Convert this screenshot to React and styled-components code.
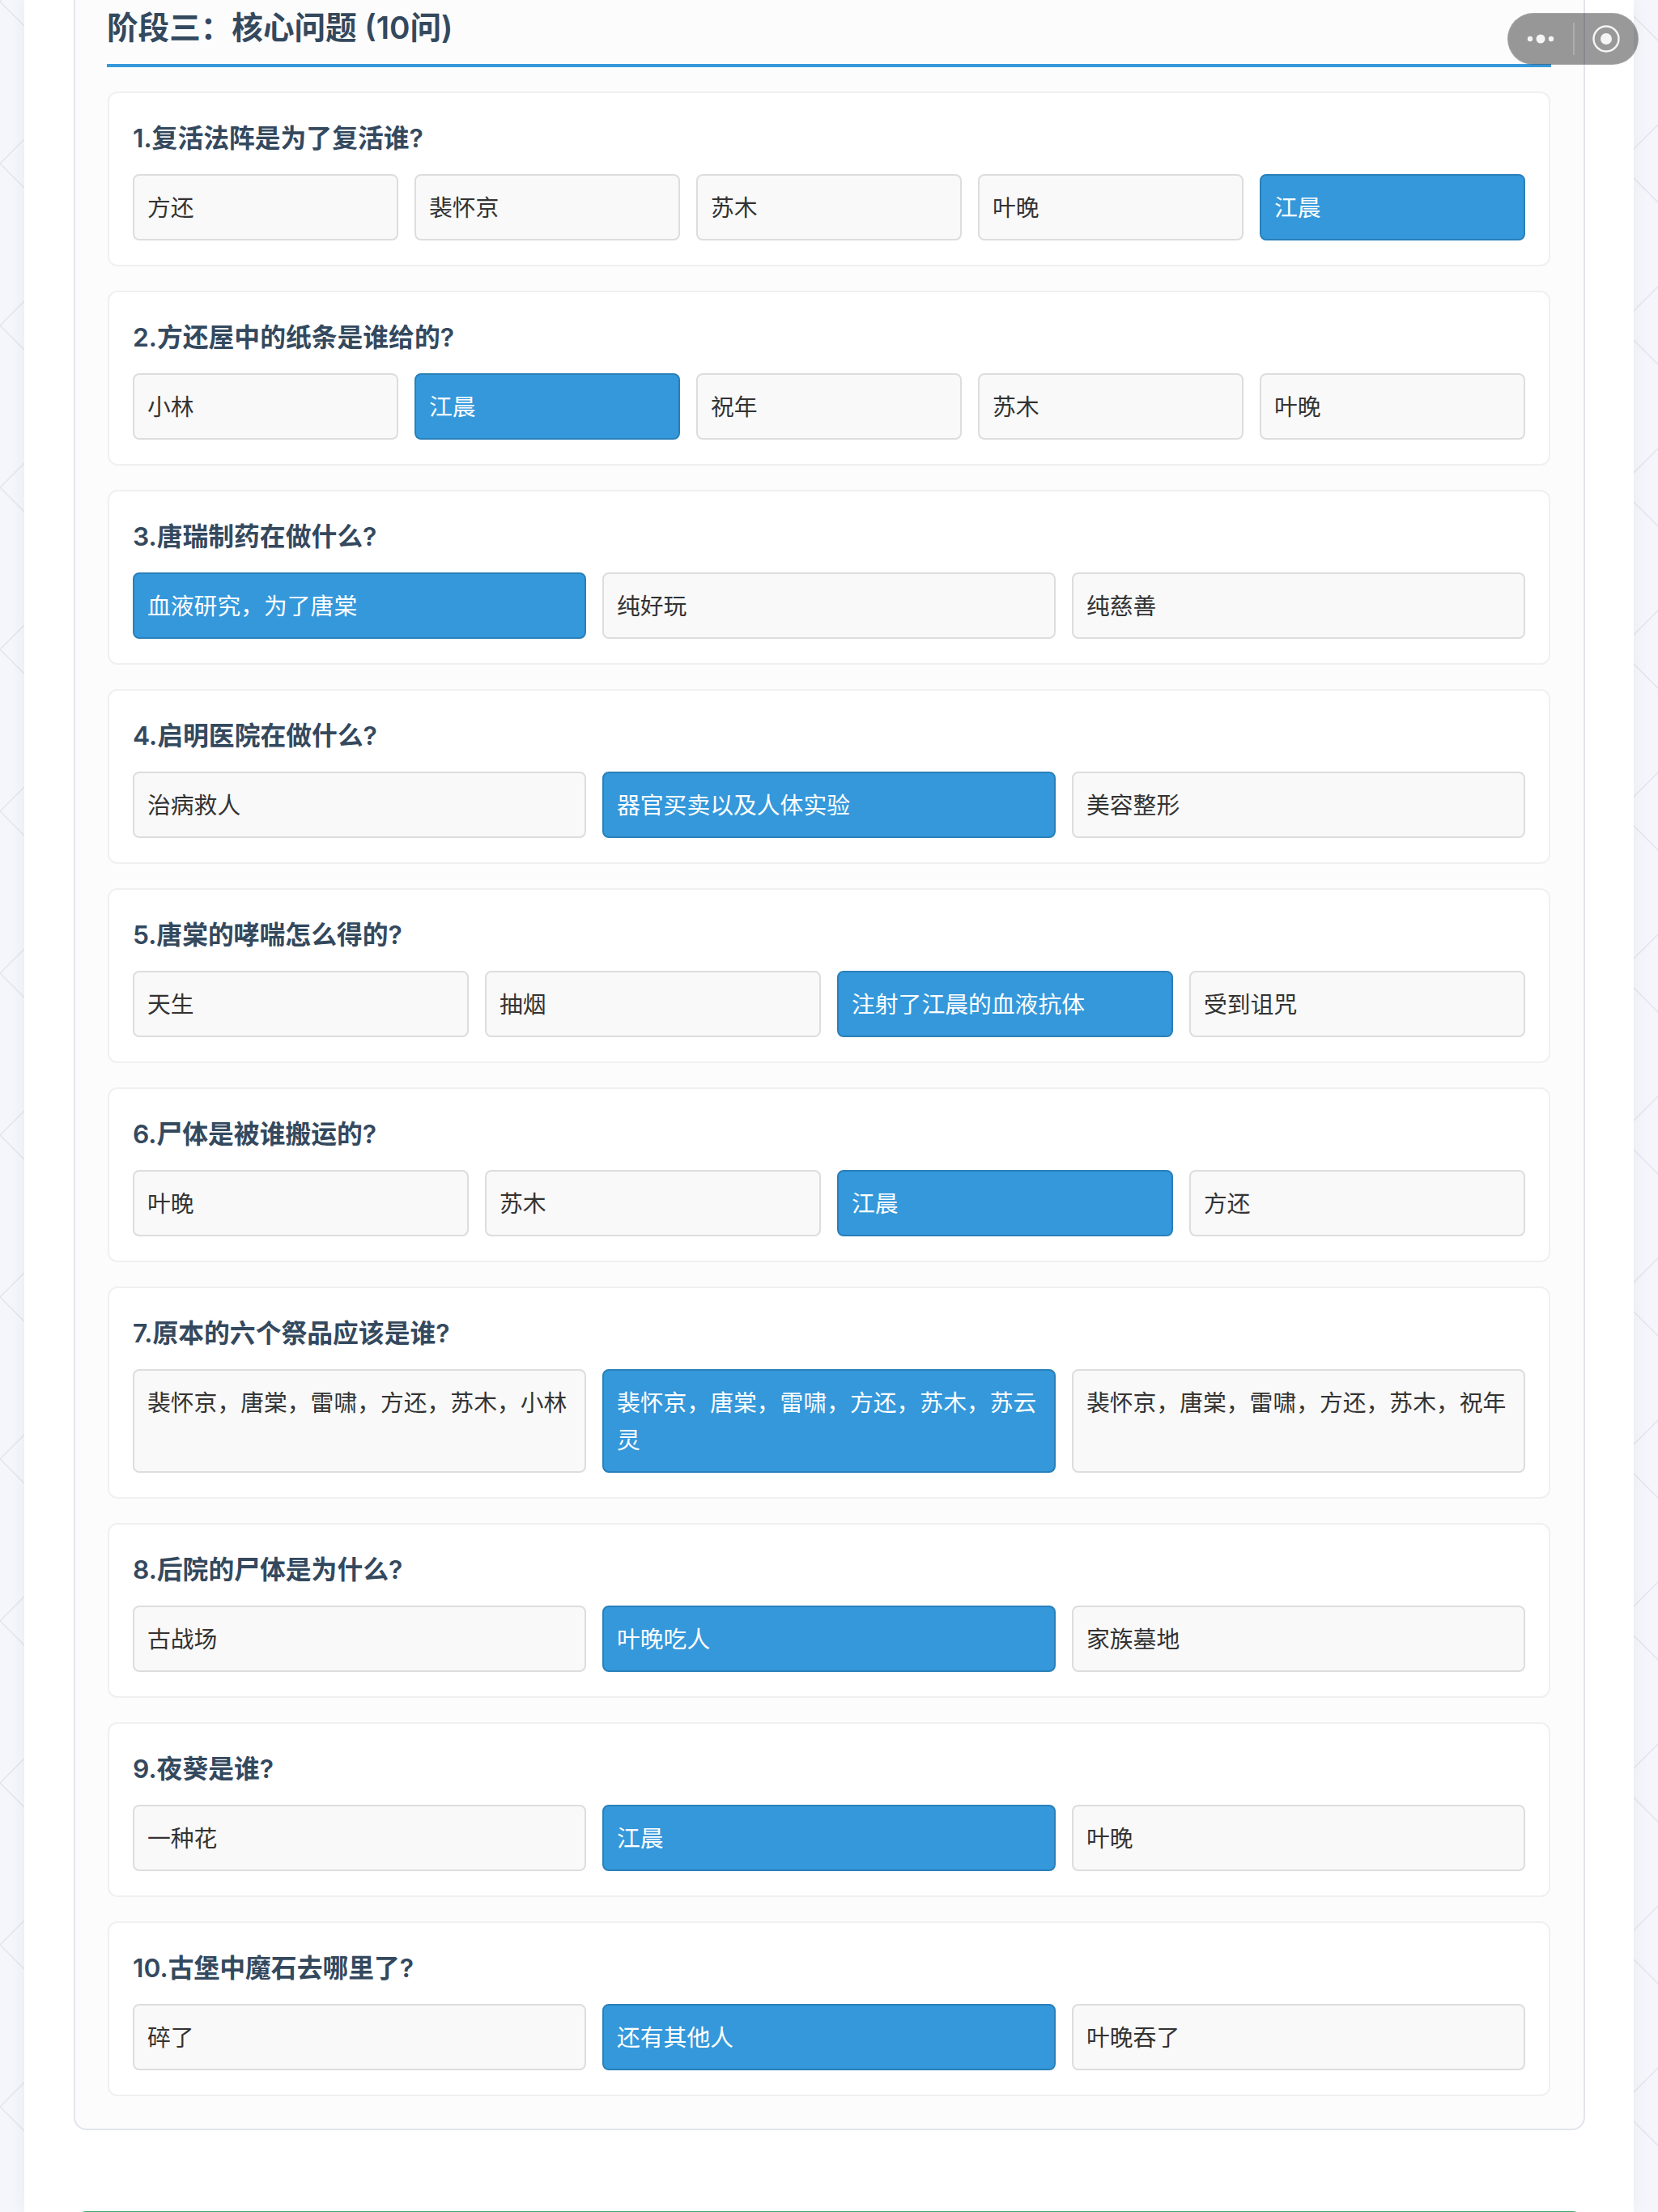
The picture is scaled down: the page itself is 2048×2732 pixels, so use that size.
import React from "react";
import styled, { createGlobalStyle } from "styled-components";

const Global = createGlobalStyle`
  html, body { margin: 0; padding: 0; background: #f5f6fb; }
  * { box-sizing: border-box; }
  body { font-family: Inter, "Noto Sans CJK SC", "Noto Sans", sans-serif; }
`;

const Page = styled.div`
  position: relative;
  height: 2732px;
  padding: 0 30px;
  overflow: hidden;
  background: #f5f6fb;
`;

const Pattern = styled.svg`
  position: absolute;
  inset: 0;
  width: 100%;
  height: 100%;
`;

const Sheet = styled.main`
  position: relative;
  height: 100%;
  padding: 0 60px 0 61px;
  background: #fff;
  box-shadow: 0 0 20px rgba(0, 0, 0, 0.05);
`;

const Stage = styled.section`
  height: 2631px;
  padding: 0 41px 0 40px;
  background: #fcfcfc;
  border: 2px solid #e2e5ec;
  border-top: 0;
  border-radius: 0 0 16px 16px;
`;

const StageTitle = styled.h2`
  height: 83px;
  margin: 0 0 30px -1px;
  width: calc(100% + 2px);
  padding-top: 11px;
  border-bottom: 4px solid #3498db;
  color: #34495e;
  font-size: 38.6px;
  line-height: 46px;
  font-weight: 600;
`;

const QuestionList = styled.div`
  display: flex;
  flex-direction: column;
  gap: 30.5px;
`;

const Card = styled.article`
  padding: 32px 29px 30px;
  background: #fff;
  border: 2px solid #f0f0f0;
  border-radius: 12px;
`;

const Question = styled.h3`
  margin: 0 0 20px;
  color: #34495e;
  font-size: 31.8px;
  line-height: 48px;
  font-weight: 600;
`;

const Options = styled.div`
  display: grid;
  grid-template-columns: repeat(${(p) => p.$count}, 1fr);
  gap: 20px;
`;

const Option = styled.div`
  padding: 17px 16px 14.5px;
  border: 2px solid ${(p) => (p.$selected ? "#2980b9" : "#ddd")};
  border-radius: 8px;
  background: ${(p) => (p.$selected ? "#3498db" : "#f9f9f9")};
  color: ${(p) => (p.$selected ? "#fff" : "#333")};
  font-size: 28.8px;
  line-height: 46px;
`;

const NextPanel = styled.div`
  height: 40px;
  margin-top: 100px;
  border: 2px solid #3aa76d;
  border-radius: 16px 16px 0 0;
`;

const Capsule = styled.div`
  position: absolute;
  top: 16px;
  left: 1862px;
  width: 162px;
  height: 64px;
  display: grid;
  grid-template-columns: 80px 1px 1fr;
  align-items: center;
  justify-items: center;
  background: rgba(0, 0, 0, 0.4);
  border: 1px solid rgba(255, 255, 255, 0.12);
  border-radius: 32px;
`;

const CapsuleDivider = styled.span`
  width: 2px;
  height: 40px;
  background: rgba(255, 255, 255, 0.22);
`;

const data = [
  ["1.复活法阵是为了复活谁?", ["方还", "裴怀京", "苏木", "叶晚", "江晨"], 4],
  ["2.方还屋中的纸条是谁给的?", ["小林", "江晨", "祝年", "苏木", "叶晚"], 1],
  ["3.唐瑞制药在做什么?", ["血液研究，为了唐棠", "纯好玩", "纯慈善"], 0],
  ["4.启明医院在做什么?", ["治病救人", "器官买卖以及人体实验", "美容整形"], 1],
  ["5.唐棠的哮喘怎么得的?", ["天生", "抽烟", "注射了江晨的血液抗体", "受到诅咒"], 2],
  ["6.尸体是被谁搬运的?", ["叶晚", "苏木", "江晨", "方还"], 2],
  ["7.原本的六个祭品应该是谁?", ["裴怀京，唐棠，雷啸，方还，苏木，小林", "裴怀京，唐棠，雷啸，方还，苏木，苏云灵", "裴怀京，唐棠，雷啸，方还，苏木，祝年"], 1],
  ["8.后院的尸体是为什么?", ["古战场", "叶晚吃人", "家族墓地"], 1],
  ["9.夜葵是谁?", ["一种花", "江晨", "叶晚"], 1],
  ["10.古堡中魔石去哪里了?", ["碎了", "还有其他人", "叶晚吞了"], 1],
];

export default function App() {
  return (
    <>
      <Global />
      <Page>
        <Pattern aria-hidden="true">
          <defs>
            <pattern id="chevrons" width="200" height="200" patternUnits="userSpaceOnUse" y="2">
              <path d="M100 -100 L0 0 L100 100" fill="none" stroke="#e3e5ec" strokeWidth="1.5" />
              <path d="M100 100 L0 200 L100 300" fill="none" stroke="#e3e5ec" strokeWidth="1.5" />
            </pattern>
          </defs>
          <rect width="100%" height="100%" fill="url(#chevrons)" />
        </Pattern>
        <Sheet>
          <Stage>
            <StageTitle>阶段三：核心问题 (10问)</StageTitle>
            <QuestionList>
              {data.map(([q, opts, sel]) => (
                <Card key={q}>
                  <Question>{q}</Question>
                  <Options $count={opts.length}>
                    {opts.map((o, i) => (
                      <Option key={o} $selected={i === sel}>{o}</Option>
                    ))}
                  </Options>
                </Card>
              ))}
            </QuestionList>
          </Stage>
          <NextPanel />
        </Sheet>
        <Capsule>
          <svg width="42" height="14" viewBox="0 0 42 14" fill="#f5f5f5">
            <circle cx="8" cy="7" r="3.2" />
            <circle cx="21" cy="7" r="5.5" />
            <circle cx="34" cy="7" r="3.2" />
          </svg>
          <CapsuleDivider />
          <svg width="36" height="36" viewBox="0 0 36 36" fill="none">
            <circle cx="18" cy="18" r="15.5" stroke="#f5f5f5" strokeWidth="2.4" />
            <circle cx="18" cy="18" r="7" fill="#f5f5f5" />
          </svg>
        </Capsule>
      </Page>
    </>
  );
}
